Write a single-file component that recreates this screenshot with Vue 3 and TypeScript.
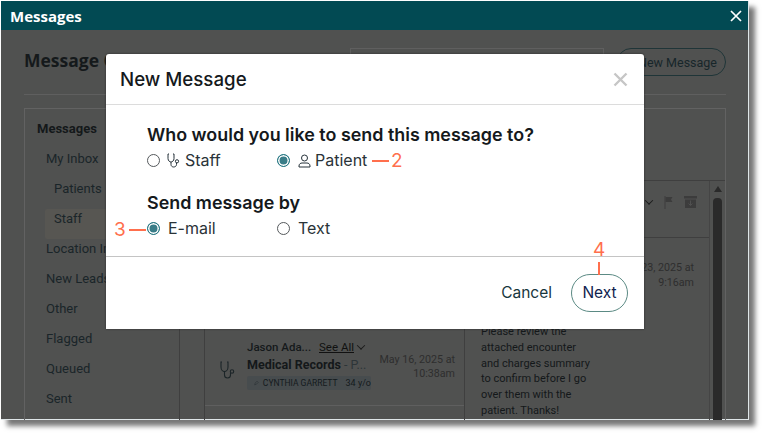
<script setup lang="ts">
import { ref } from "vue";

const recipient = ref("patient");
const channel = ref("email");

const folders = [
  { label: "My Inbox", sub: false, active: false },
  { label: "Patients", sub: true, active: false },
  { label: "Staff", sub: true, active: true },
  { label: "Location Inbox", sub: false, active: false },
  { label: "New Leads", sub: false, active: false },
  { label: "Other", sub: false, active: false },
  { label: "Flagged", sub: false, active: false },
  { label: "Queued", sub: false, active: false },
  { label: "Sent", sub: false, active: false },
];
const body = ["Please review the", "attached encounter", "and charges summary", "to confirm before I go", "over them with the", "patient. Thanks!"];
</script>

<template>
  <div class="page">
    <div class="window">
      <header class="bar">
        <span class="bar-title">Messages</span>
        <svg width="12" height="12" viewBox="0 0 12 12"><path d="M1 1l10 10M11 1L1 11" stroke="#fff" stroke-width="1.7" /></svg>
      </header>

      <main class="main">
        <div class="toolbar">
          <h1 class="page-title">Message Center</h1>
          <div class="search"></div>
          <button class="new-btn">New Message</button>
        </div>
        <div class="panel">
          <nav class="sidebar">
            <div class="side-head">Messages</div>
            <div v-for="f in folders" :key="f.label" class="folder" :class="{ sub: f.sub, active: f.active }">{{ f.label }}</div>
          </nav>
          <div class="content">
            <div class="content-top"></div>
            <div class="content-body">
              <div class="list">
                <div class="row">
                  <svg class="row-icon" width="17" height="18" viewBox="0 0 17 18" fill="none" stroke="#1c2528" stroke-width="1.1">
                    <path d="M2 1H1v5c0 3 2 4.500 3.500 4.500S8 9 8 6V1H7" />
                    <path d="M4.500 10.500V14c0 2 1.500 3 3 3s3-1 3-3v-2" />
                    <circle cx="12" cy="10.500" r="1.700" />
                  </svg>
                  <div class="row-main">
                    <div class="row-from"><b>Jason Ada...</b><u>See All</u><i class="chev"></i></div>
                    <div class="row-subject"><b>Medical Records</b> - P...</div>
                    <div class="row-tag">
                      <svg width="8" height="8" viewBox="0 0 8 8"><path d="M1 7l1-3 3-3 2 2-3 3z" fill="none" stroke="#2c3336" /></svg>
                      CYNTHIA GARRETT<span>34 y/o</span>
                    </div>
                  </div>
                  <div class="row-date">May 16, 2025 at<br />10:38am</div>
                </div>
              </div>
              <div class="detail">
                <div class="detail-top">
                  <i class="chev"></i>
                  <svg width="10" height="13" viewBox="0 0 10 13"><path d="M1 0v13" stroke="#3c3c3c" /><path d="M1.500 1H8.500L7 3.500 8.500 6H1.500z" fill="#3c3c3c" /></svg>
                  <svg width="13" height="12" viewBox="0 0 13 12"><path d="M0 0h13v2.500H0zM1 3.500h11V12H1z" fill="#3c3c3c" /><path d="M6.500 4.500v5M4.500 7.500l2 2 2-2" stroke="#505050" fill="none" /></svg>
                </div>
                <div class="detail-date">23, 2025 at<br />9:16am</div>
                <div class="detail-text">
                  <div v-for="line in body" :key="line">{{ line }}</div>
                </div>
              </div>
              <div class="scroll">
                <i class="scroll-up"></i>
                <i class="scroll-thumb"></i>
              </div>
            </div>
          </div>
        </div>
      </main>

      <section class="modal">
        <div class="modal-head">
          <h2>New Message</h2>
          <svg width="15" height="15" viewBox="0 0 15 15"><path d="M1.500 1.500l12 12M13.500 1.500l-12 12" stroke="#c6c6c6" stroke-width="2.400" /></svg>
        </div>
        <div class="modal-body">
          <h3>Who would you like to send this message to?</h3>
          <div class="choices">
            <label class="choice">
              <input v-model="recipient" type="radio" value="staff" />
              <svg class="who-icon" width="15" height="15" viewBox="0 0 15 15" fill="none" stroke="#26323a" stroke-width="1">
                <path d="M2 1H1v4.500C1 8 3 9 4 9s3-1 3-3.500V1H6" />
                <path d="M4 9v2.500C4 13 5.200 14 6.700 14s2.800-1 2.800-2.500V10" />
                <circle cx="10" cy="8.300" r="1.600" />
              </svg>
              Staff
            </label>
            <label class="choice">
              <input v-model="recipient" type="radio" value="patient" />
              <svg class="who-icon gap" width="13" height="14" viewBox="0 0 13 14" fill="none" stroke="#26323a" stroke-width="1">
                <circle cx="6.500" cy="4" r="3" />
                <path d="M1 13v-1c0-2 1.500-3 3-3h5c1.500 0 3 1 3 3v1z" />
              </svg>
              Patient
            </label>
          </div>
          <h3 class="second">Send message by</h3>
          <div class="choices">
            <label class="choice">
              <input v-model="channel" type="radio" value="email" />
              <span class="plain">E-mail</span>
            </label>
            <label class="choice">
              <input v-model="channel" type="radio" value="text" />
              <span class="plain">Text</span>
            </label>
          </div>
        </div>
        <div class="modal-foot">
          <button class="cancel">Cancel</button>
          <button class="next">Next</button>
        </div>
      </section>

      <div class="note note-2"><i class="dash"></i>2</div>
      <div class="note note-3">3<i class="dash"></i></div>
      <div class="note note-4">4<i class="tick"></i></div>
    </div>
  </div>
</template>

<style>
body { background: #fff; }
</style>

<style scoped>
.page {
  width: 765px;
  height: 435px;
  padding: 1px 0 0 1px;
  box-sizing: border-box;
  overflow: hidden;
}
.window {
  position: relative;
  width: 748px;
  height: 419px;
  background: #505150;
  border-right: 1px solid #dfe6e8;
  border-bottom: 1px solid #dfe6e8;
  box-shadow: 6px 6px 5px #777;
  font-family: "Roboto", "Liberation Sans", sans-serif;
  color: #1a2529;
  box-sizing: border-box;
}
.bar {
  height: 29px;
  background: #024a53;
  display: flex;
  align-items: center;
  justify-content: space-between;
  padding: 0 6px 0 9px;
  color: #fff;
}
.bar-title { font-size: 15px; font-weight: 700; font-family: "Open Sans", sans-serif; }
.main { padding: 18px 22px 0 23px; }
.toolbar {
  display: flex;
  align-items: flex-start;
  height: 46px;
  border-bottom: 1px solid #5f5f5f;
}
.page-title {
  margin: 0;
  width: 326px;
  font-size: 17.500px;
  line-height: 24px;
  font-weight: 700;
  font-family: "Open Sans", sans-serif;
  white-space: nowrap;
  overflow: hidden;
  color: #15191b;
}
.search {
  width: 254px;
  height: 28px;
  border: 1px solid #5f5f5f;
  box-sizing: border-box;
}
.new-btn {
  margin-left: 13px;
  width: 109px;
  height: 28px;
  border: 1px solid #1f3538;
  border-radius: 14px;
  background: none;
  font: 12.500px "Roboto", sans-serif;
  color: #17262a;
  text-align: right;
  padding: 0 8px 0 0;
}
.panel {
  margin-top: 13px;
  display: flex;
  height: 312px;
  border: 1px solid #626262;
  border-bottom: 0;
  box-sizing: border-box;
}
.sidebar {
  width: 155px;
  flex: none;
  border-right: 1px solid #3f3f3f;
  padding: 10px 0 0 12px;
  box-sizing: border-box;
  font-size: 13px;
}
.side-head { height: 30px; line-height: 20px; font-weight: 700; color: #14181a; }
.folder { height: 30px; line-height: 20px; padding-left: 9px; white-space: nowrap; color: #1a2529; }
.folder.sub { padding-left: 17px; }
.folder.active { background: #575652; width: 65px; box-sizing: border-box; margin-left: 8px; padding-left: 9px; border-radius: 2px; }
.content {
  margin-left: 24px;
  flex: 1;
  min-width: 0;
  border-left: 1px solid #3f3f3f;
  display: flex;
  flex-direction: column;
}
.content-top { height: 72px; border-bottom: 1px solid #3f3f3f; box-sizing: border-box; }
.content-body { flex: 1; display: flex; min-height: 0; }
.list {
  width: 260px;
  flex: none;
  border-right: 1px solid #3f3f3f;
  padding-top: 158px;
  box-sizing: border-box;
}
.row {
  height: 66px;
  border-bottom: 1px solid #5f5f5f;
  display: flex;
  align-items: flex-start;
  padding-left: 15px;
}
.row-icon { margin-top: 22px; }
.row-main { margin-left: 10px; width: 124px; font-size: 13px; }
.row-from { height: 16px; line-height: 16px; font-size: 11.500px; display: flex; align-items: center; white-space: nowrap; }
.row-from b { font-weight: 500; width: 72px; color: #15191b; }
.row-from u { font-weight: 400; margin-right: 4px; color: #111; }
.row-subject { margin-top: 1px; height: 18px; line-height: 18px; white-space: nowrap; font-size: 12.500px; color: #2d3538; }
.row-subject b { font-weight: 700; color: #14181a; }
.row-tag {
  margin-top: 2px;
  height: 14px;
  line-height: 14px;
  background: #474c4e;
  border-radius: 2px;
  padding-left: 7px;
  display: flex;
  align-items: center;
  gap: 4px;
  font-size: 8.500px;
  white-space: nowrap;
  overflow: hidden;
  color: #141a1d;
}
.row-tag span { margin-left: 4px; font-size: 9px; }
.row-date {
  margin-left: auto;
  margin-right: 9px;
  margin-top: 14px;
  width: 80px;
  text-align: right;
  font-size: 10.700px;
  line-height: 14px;
  color: #2e2e2e;
}
.detail { flex: 1; min-width: 0; }
.detail-top {
  height: 57px;
  border-bottom: 1px solid #3f3f3f;
  box-sizing: border-box;
  display: flex;
  align-items: flex-start;
  justify-content: flex-end;
  gap: 10px;
  padding: 15px 12px 0 0;
}
.detail-top .chev { margin: 3px 2px 0 0; }
.detail-date {
  margin-top: 22px;
  padding-right: 15px;
  text-align: right;
  font-size: 10.700px;
  line-height: 15px;
  color: #2e2e2e;
}
.detail-text {
  margin-top: 34px;
  padding-left: 16px;
  font-size: 11px;
  line-height: 15.800px;
  white-space: nowrap;
  color: #14181a;
}
.scroll {
  width: 16px;
  flex: none;
  border-left: 1px solid #454545;
  box-sizing: border-box;
  display: flex;
  flex-direction: column;
  align-items: center;
  padding-top: 5px;
}
.scroll-up {
  width: 0;
  height: 0;
  border: 4.500px solid transparent;
  border-top: 0;
  border-bottom: 6px solid #2a2a2a;
}
.scroll-thumb { margin-top: 6px; width: 9px; flex: 1; background: #2a2a2a; border-radius: 4px 4px 0 0; }
.chev {
  display: inline-block;
  width: 5px;
  height: 5px;
  border-right: 1.200px solid #1b1b1b;
  border-bottom: 1.200px solid #1b1b1b;
  transform: rotate(45deg) translate(-1px, -1px);
}

.modal {
  position: absolute;
  left: 105px;
  top: 53px;
  width: 538px;
  height: 275px;
  background: #fff;
  border-radius: 3px 3px 0 0;
  box-shadow: 0 0 2px #222;
  display: flex;
  flex-direction: column;
  font-family: "Inter", "Liberation Sans", sans-serif;
  color: #15191c;
}
.modal-head {
  height: 51px;
  flex: none;
  border-bottom: 1px solid #dcdcdc;
  box-sizing: border-box;
  display: flex;
  align-items: center;
  justify-content: space-between;
  padding: 0 16px 0 14px;
}
.modal-head h2 { margin: 0; font-size: 18.700px; font-weight: 500; }
.modal-body {
  flex: 1;
  padding: 19px 0 0 41px;
  border-bottom: 1px solid #c4c4c4;
}
h3 { margin: 0; font-size: 17.900px; line-height: 22px; font-weight: 600; white-space: nowrap; }
h3.second { margin-top: 22px; }
.choices { display: flex; height: 20px; margin-top: 4px; }
.choice {
  width: 130px;
  display: flex;
  align-items: center;
  font-size: 16px;
  color: #2a3338;
}
.choice input {
  appearance: none;
  width: 13px;
  height: 13px;
  margin: 0;
  border: 1px solid #55595c;
  border-radius: 50%;
  background: #fff;
  box-sizing: border-box;
  flex: none;
}
.choice input:checked {
  border: 1.500px solid #1f7480;
  background: #3a7d88;
  box-shadow: inset 0 0 0 1.500px #fff;
}
.who-icon { margin: 1px 3px 0 7px; }
.who-icon.gap { margin-left: 8px; margin-right: 4px; }
.plain { margin-left: 8px; }
.modal-foot {
  height: 71px;
  flex: none;
  display: flex;
  align-items: center;
  justify-content: flex-end;
  padding: 0 16px 1px 0;
  gap: 19px;
}
.cancel, .next {
  font: 400 15.500px "Inter", sans-serif;
  background: none;
  color: #17363d;
  padding: 0;
}
.cancel { border: 0; }
.next {
  width: 57px;
  height: 38px;
  border: 1px solid #5b8a84;
  border-radius: 19px;
  color: #10224e;
}
.note {
  position: absolute;
  display: flex;
  align-items: center;
  font: 19px/22px "Inter", sans-serif;
  color: #ff6f4d;
}
.dash { display: block; width: 17px; height: 2px; background: #ff6f4d; }
.tick { display: block; width: 2px; height: 13px; background: #ff6f4d; margin-top: 1px; }
.note-2 { left: 371px; top: 149px; gap: 2px; }
.note-3 { left: 113px; top: 218px; gap: 3px; }
.note-4 { left: 592px; top: 238px; flex-direction: column; }
</style>
